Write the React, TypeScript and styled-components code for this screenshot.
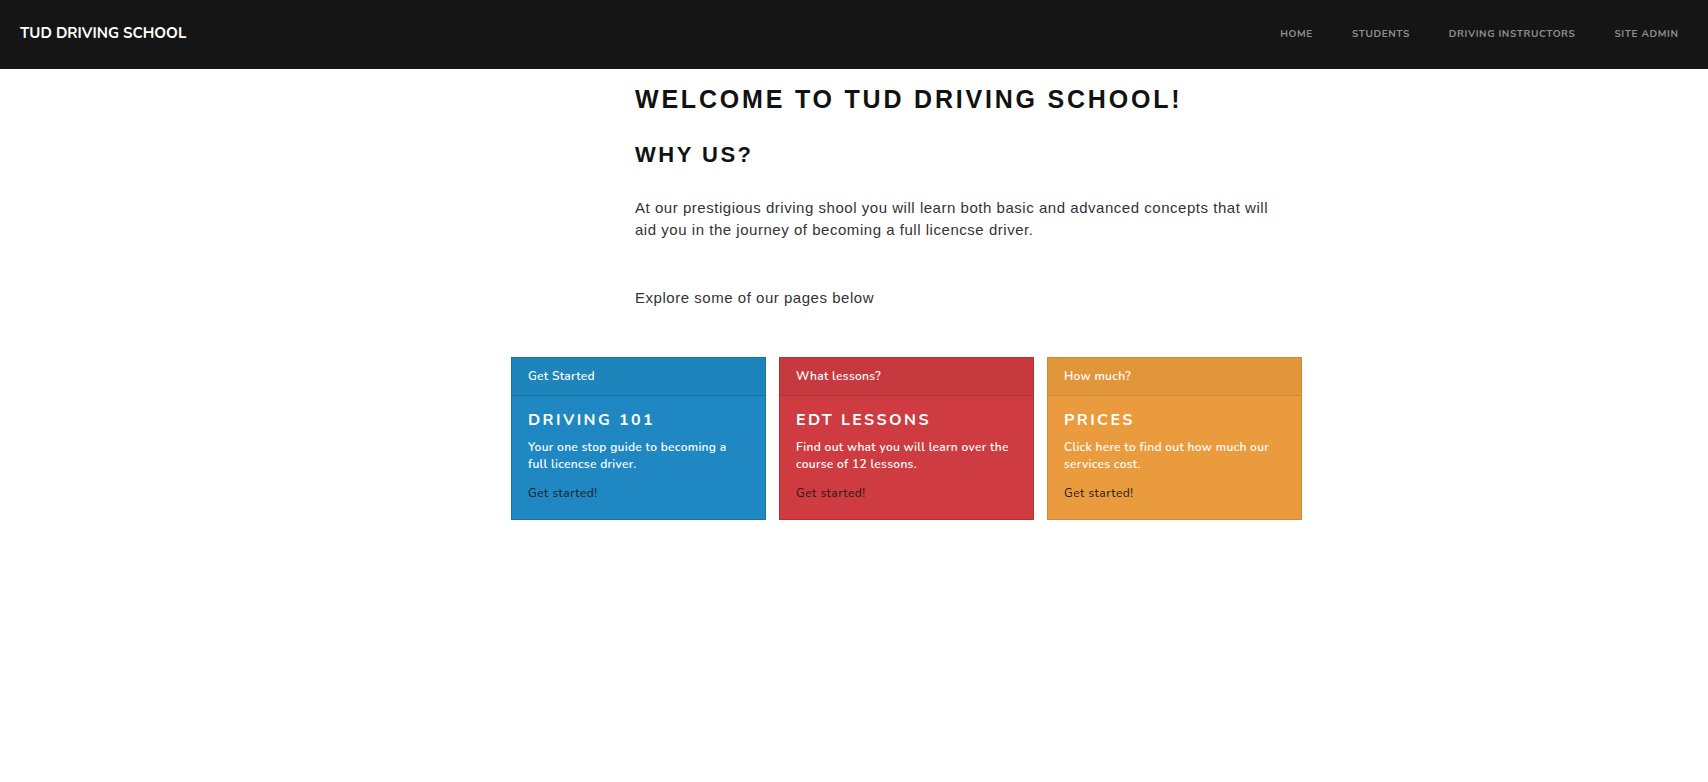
import React from "react";
import styled, { createGlobalStyle } from "styled-components";

const GlobalStyle = createGlobalStyle`
  html, body { margin: 0; padding: 0; background: #ffffff; }
  body { font-family: "Liberation Sans", Arial, sans-serif; }
  * { box-sizing: border-box; }
`;

const Navbar = styled.header`
  height: 69px;
  background: #151515;
  display: flex;
  align-items: center;
  justify-content: space-between;
  padding: 0 10px 0 20px;
`;

const Brand = styled.a`
  font-family: "Nunito", Lato, "Open Sans", sans-serif;
  font-size: 15px;
  font-weight: 700;
  color: #ffffff;
  text-decoration: none;
  letter-spacing: 0;
  padding-bottom: 4px;
`;

const NavList = styled.nav`
  display: flex;
  align-items: center;
`;

const NavLink = styled.a`
  font-family: "Nunito", Lato, "Open Sans", sans-serif;
  font-size: 10px;
  font-weight: 700;
  letter-spacing: 0.6px;
  text-transform: uppercase;
  color: #8e8e8e;
  text-decoration: none;
  padding: 0 19.5px;
  padding-bottom: 2px;
`;

const Main = styled.main`
  padding: 15px 0 40px 511px;
`;

const Intro = styled.section`
  margin-left: 124px;
  max-width: 650px;
  color: #121212;
`;

const Title = styled.h1`
  margin: 0;
  font-family: "Liberation Sans", Arial, sans-serif;
  font-size: 25px;
  line-height: 30px;
  font-weight: 700;
  letter-spacing: 2.8px;
  text-transform: uppercase;
`;

const Subtitle = styled.h2`
  margin: 28px 0 0;
  font-size: 22px;
  line-height: 26px;
  font-weight: 700;
  letter-spacing: 2.5px;
  text-transform: uppercase;
`;

const Paragraph = styled.p<{ $gap: number }>`
  margin: ${(p) => p.$gap}px 0 0;
  font-size: 15px;
  line-height: 22px;
  color: #333333;
  letter-spacing: 0.53px;
`;

const CardRow = styled.div`
  display: flex;
  gap: 13px;
  margin-top: 48px;
`;

const Card = styled.a<{ $bg: string; $head: string; $border: string }>`
  width: 255px;
  display: flex;
  flex-direction: column;
  background: ${(p) => p.$bg};
  border: 1px solid ${(p) => p.$border};
  text-decoration: none;
  font-family: "Nunito", Lato, "Open Sans", sans-serif;
  color: #ffffff;

  & > header {
    background: ${(p) => p.$head};
    border-bottom: 1px solid ${(p) => p.$border};
  }
`;

const CardHeader = styled.header`
  padding: 9px 16px 10px;
  font-size: 12px;
  line-height: 18px;
  font-weight: 600;
  letter-spacing: 0.3px;
`;

const CardBody = styled.div`
  padding: 15px 16px 18px;
`;

const CardTitle = styled.h3`
  margin: 0 0 9px;
  font-size: 16px;
  line-height: 19px;
  font-weight: 700;
  letter-spacing: 2.4px;
  text-transform: uppercase;
`;

const CardText = styled.p`
  margin: 0;
  font-size: 12px;
  line-height: 17px;
  font-weight: 600;
  letter-spacing: 0.3px;
`;

const CardLink = styled.span`
  display: block;
  margin-top: 12px;
  font-size: 12px;
  line-height: 16px;
  color: #1a1a1a;
  letter-spacing: 0.5px;
`;

const cards = [
  {
    header: "Get Started",
    title: "Driving 101",
    text: "Your one stop guide to becoming a full licencse driver.",
    bg: "#1f88c2",
    head: "#1d84bc",
    border: "#1a72a3",
  },
  {
    header: "What lessons?",
    title: "EDT Lessons",
    text: "Find out what you will learn over the course of 12 lessons.",
    bg: "#ce3b41",
    head: "#c6393f",
    border: "#b33338",
  },
  {
    header: "How much?",
    title: "Prices",
    text: "Click here to find out how much our services cost.",
    bg: "#ea9b3d",
    head: "#e2963b",
    border: "#cf8a36",
  },
];

export default function App() {
  return (
    <>
      <GlobalStyle />
      <Navbar>
        <Brand href="#">TUD DRIVING SCHOOL</Brand>
        <NavList>
          <NavLink href="#">Home</NavLink>
          <NavLink href="#">Students</NavLink>
          <NavLink href="#">Driving Instructors</NavLink>
          <NavLink href="#">Site Admin</NavLink>
        </NavList>
      </Navbar>
      <Main>
        <Intro>
          <Title>Welcome to TUD Driving School!</Title>
          <Subtitle>Why us?</Subtitle>
          <Paragraph $gap={29}>
            At our prestigious driving shool you will learn both basic and advanced concepts that will aid you in the journey of becoming a full licencse driver.
          </Paragraph>
          <Paragraph $gap={46}>Explore some of our pages below</Paragraph>
        </Intro>
        <CardRow>
          {cards.map((c) => (
            <Card key={c.title} href="#" $bg={c.bg} $head={c.head} $border={c.border}>
              <CardHeader>{c.header}</CardHeader>
              <CardBody>
                <CardTitle>{c.title}</CardTitle>
                <CardText>{c.text}</CardText>
                <CardLink>Get started!</CardLink>
              </CardBody>
            </Card>
          ))}
        </CardRow>
      </Main>
    </>
  );
}
